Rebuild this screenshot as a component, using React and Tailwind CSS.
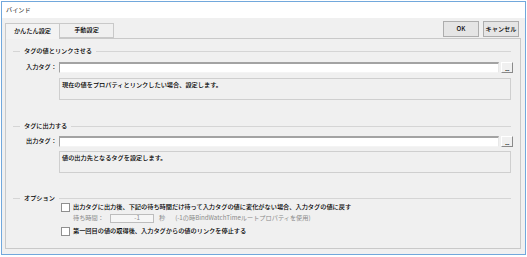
// Bind dialog: title bar, two tabs, OK/Cancel and the "かんたん設定" page
const LINE = 'h-px flex-1 bg-[#d5d5d5]';

function GroupHeader({ title, className = '' }) {
  return (
    <div className={`flex items-center h-[8px] pl-[7px] pr-[9px] ${className}`}>
      <div className="w-[7px] h-px bg-[#d5d5d5]" />
      <span className="mx-[4px] whitespace-nowrap">{title}</span>
      <div className={LINE} />
    </div>
  );
}

function TagRow({ label, className = '' }) {
  return (
    <div className={`flex items-center h-[11px] pl-[20px] ${className}`}>
      <span className="w-[33px] whitespace-nowrap">{label}</span>
      <div className="w-[440px] h-[11px] bg-white border-t-2 border-l border-t-[#a3a3a3] border-l-[#a3a3a3] border-b border-r border-b-[#f4f4f4] border-r-[#e8e8e8]" />
      <div className="ml-[2px] w-[12px] h-[11px] bg-[#f0f0f0] border border-t-white border-l-white border-b-[#8a8a8a] border-r-[#8a8a8a] flex items-end justify-center">
        <span className="text-[6px] leading-[6px] tracking-[-0.5px]">...</span>
      </div>
    </div>
  );
}

function DescBox({ text, className = '' }) {
  return (
    <div className={`ml-[53px] w-[452px] h-[22px] border border-[#cfcfcf] bg-[#f0f0f0] pl-[2px] pt-[3px] whitespace-nowrap ${className}`}>
      {text}
    </div>
  );
}

function CheckRow({ text, className = '' }) {
  return (
    <div className={`flex items-center h-[9px] pl-[55px] ${className}`}>
      <div className="w-[9px] h-[9px] bg-white border border-[#8f8f8f]" />
      <span className="ml-[3px] whitespace-nowrap">{text}</span>
    </div>
  );
}

export default function App() {
  return (
    <div className="w-[527px] h-[257px] bg-white pl-px pt-px text-[6.2px] leading-none font-medium text-black font-['Noto_Sans_CJK_JP','Noto_Sans',sans-serif]">
      <div className="w-[525px] h-[254px] border border-[#72a8dc] flex flex-col bg-[#f0f0f0]">
        {/* Title bar */}
        <div className="h-[16px] bg-white flex items-center pl-[4px] text-[#222] font-normal">バインド</div>

        {/* Tab strip + buttons */}
        <div className="flex h-[20px] pl-[3px] pr-[6px]">
          <div className="flex items-end">
            <div className="w-[55px] h-[16px] bg-[#f3f3f3] border border-b-0 border-[#c9c9c9] flex items-center justify-center relative z-10 -mb-px pb-px">
              かんたん設定
            </div>
            <div className="w-[54px] h-[15px] bg-[#f0f0f0] border border-l-0 border-[#c9c9c9] flex items-center justify-center">
              手動設定
            </div>
          </div>
          <div className="ml-auto flex gap-[4px] mt-[3px]">
            <div className="w-[36px] h-[16px] bg-[#e5e5e5] border border-[#adadad] flex items-center justify-center">OK</div>
            <div className="w-[36px] h-[16px] bg-[#e5e5e5] border border-[#adadad] flex items-center justify-center">キャンセル</div>
          </div>
        </div>

        {/* Tab page */}
        <div className="ml-[3px] w-[516px] h-[211px] border border-[#c9c9c9] bg-[#f0f0f0] flex flex-col">
          <GroupHeader title="タグの値とリンクさせる" className="mt-[8px]" />
          <TagRow label="入力タグ：" className="mt-[7px]" />
          <DescBox text="現在の値をプロパティとリンクしたい場合、設定します。" className="mt-[5px]" />

          <GroupHeader title="タグに出力する" className="mt-[22px]" />
          <TagRow label="出力タグ：" className="mt-[6px]" />
          <DescBox text="値の出力先となるタグを設定します。" className="mt-[4px]" />

          <GroupHeader title="オプション" className="mt-[21px]" />
          <CheckRow text="出力タグに出力後、下記の待ち時間だけ待って入力タグの値に変化がない場合、入力タグの値に戻す" className="mt-px" />
          <div className="flex items-center h-[10px] pl-[67px] mt-px text-[#8a8a8a] font-normal whitespace-nowrap">
            <span>待ち時間：</span>
            <div className="ml-[6px] w-[44px] h-[9px] bg-[#f6f6f6] border border-[#bdbdbd] flex items-center justify-end pr-[13px]">-1</div>
            <span className="ml-[5px]">秒</span>
            <span className="ml-[10px]">(-1の時BindWatchTimeルートプロパティを使用)</span>
          </div>
          <CheckRow text="第一回目の値の取得後、入力タグからの値のリンクを停止する" className="mt-[4px]" />
        </div>
      </div>
    </div>
  );
}
